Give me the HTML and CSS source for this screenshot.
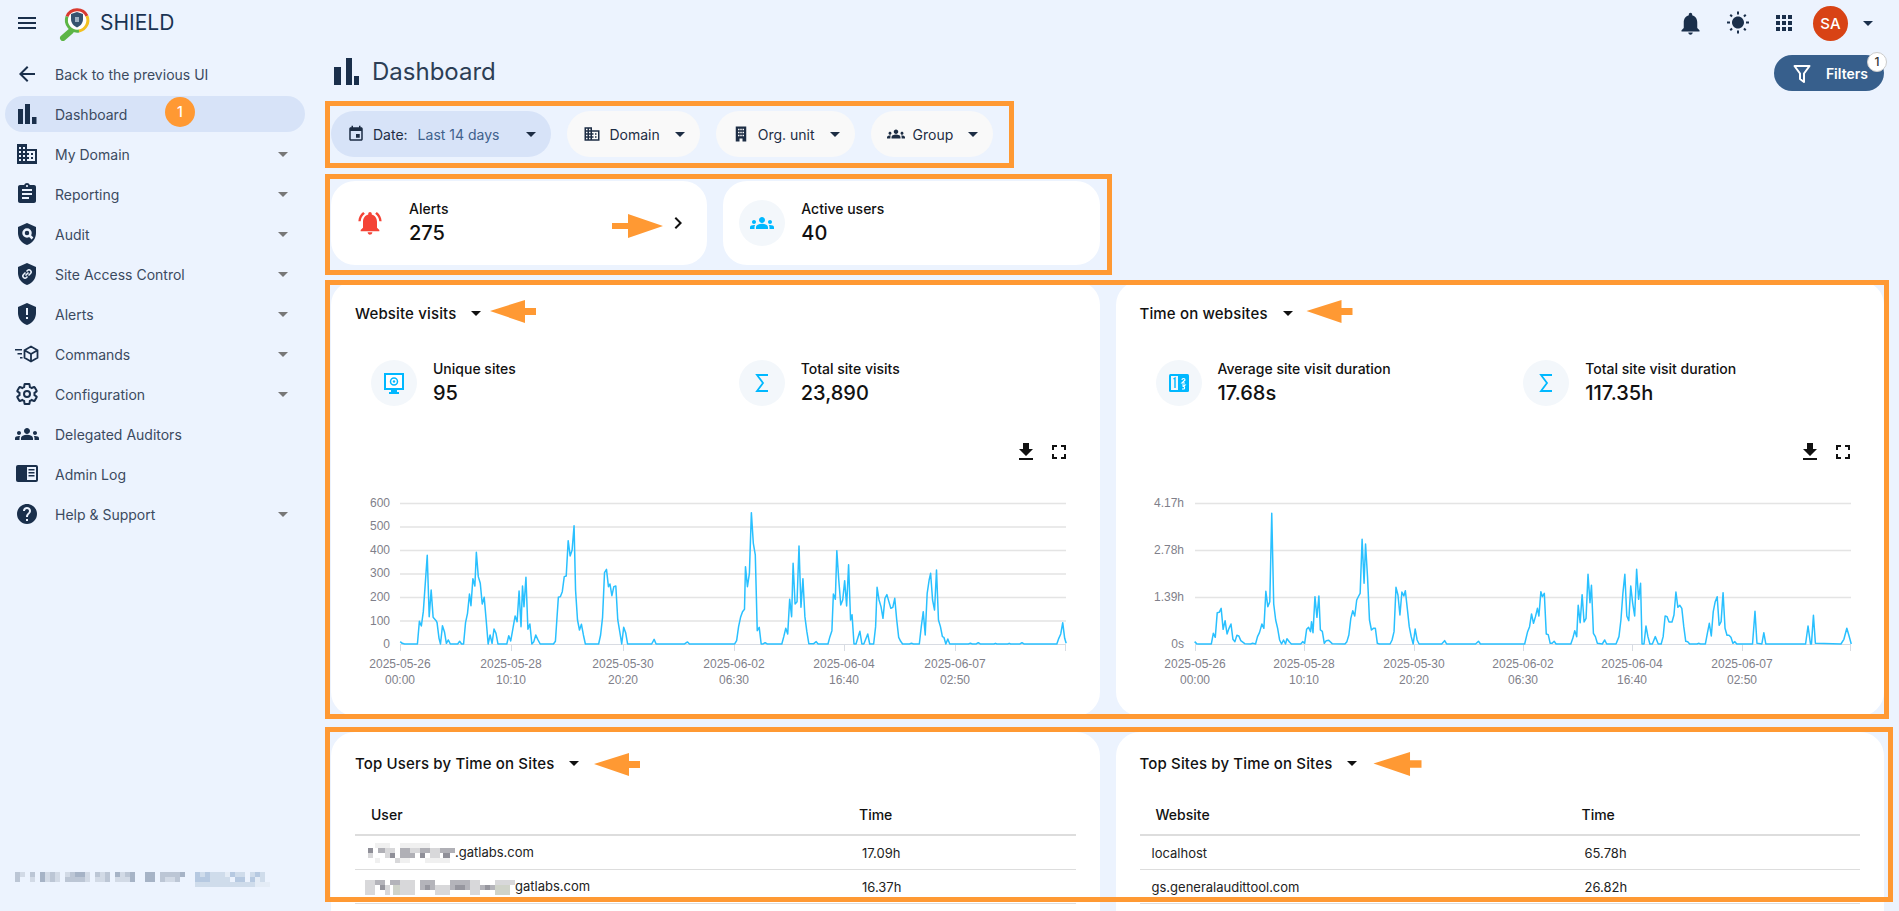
FILE: index.html
```html
<!DOCTYPE html>
<html lang="en">
<head>
    <meta charset="UTF-8">
    <meta name="viewport" content="width=device-width, initial-scale=1.0">
    <title>SHIELD Dashboard</title>
    <link rel="stylesheet" href="styles.css">
</head>
<body>
<div class="app">
    <!-- Top bar -->
    <header class="topbar">
        <svg class="icon menu-btn" viewBox="0 0 24 24"><path d="M3 18h18v-2H3v2zm0-5h18v-2H3v2zm0-7v2h18V6H3z"/></svg>
        <svg class="logo" viewBox="0 0 32 34">
            <path d="M4 31l8-7" stroke="#5cb546" stroke-width="6" stroke-linecap="round" fill="none"/>
            <circle cx="18" cy="13" r="10.5" fill="#fff"/>
            <path d="M8 9.5A11 11 0 0 1 28 9" stroke="#d93a30" stroke-width="3" fill="none"/>
            <path d="M28 9A11 11 0 0 1 20 24" stroke="#f2c020" stroke-width="3" fill="none"/>
            <path d="M20 24A11 11 0 0 1 8 9.5" stroke="#5cb546" stroke-width="3" fill="none"/>
            <path d="M18 5l6 2v5c0 4-2.600 7-6 8.500-3.400-1.500-6-4.500-6-8.500V7z" fill="#36536f"/>
            <path d="M16 10h4v5h-4z" fill="#9fb2c4"/>
        </svg>
        <span class="brand">SHIELD</span>
        <div class="topbar-right">
            <svg class="icon bell" viewBox="0 0 24 24"><path d="M12 22c1.100 0 2-.9 2-2h-4c0 1.100.89 2 2 2zm6-6v-5c0-3.070-1.640-5.640-4.500-6.320V4c0-.83-.67-1.500-1.500-1.500s-1.500.67-1.500 1.500v.68C7.630 5.360 6 7.920 6 11v5l-2 2v1h16v-1l-2-2z"/></svg>
            <svg class="icon" viewBox="0 0 24 24"><path d="M6.760 4.840l-1.800-1.790-1.410 1.410 1.790 1.790 1.420-1.410zM4 10.500H1v2h3v-2zm9-9.950h-2V3.500h2V.55zm7.450 3.910l-1.410-1.410-1.790 1.790 1.410 1.410 1.790-1.790zm-3.210 13.700l1.790 1.800 1.410-1.410-1.800-1.790-1.400 1.400zM20 10.500v2h3v-2h-3zm-8-5c-3.310 0-6 2.690-6 6s2.690 6 6 6 6-2.690 6-6-2.690-6-6-6zm-1 16.950h2V19.500h-2v2.950zm-7.450-3.910l1.410 1.410 1.790-1.800-1.410-1.410-1.790 1.800z"/></svg>
            <svg class="icon" viewBox="0 0 24 24"><path d="M4 8h4V4H4v4zm6 12h4v-4h-4v4zm-6 0h4v-4H4v4zm0-6h4v-4H4v4zm6 0h4v-4h-4v4zm6-10v4h4V4h-4zm-6 4h4V4h-4v4zm6 6h4v-4h-4v4zm0 6h4v-4h-4v4z"/></svg>
            <span class="avatar">SA</span>
            <svg class="icon avatar-caret" viewBox="0 0 24 24"><path d="M7 10l5 5 5-5z"/></svg>
        </div>
    </header>

    <div class="layout">
        <!-- Sidebar -->
        <aside class="sidebar">
            <nav class="nav">
                <a class="nav-item" href="#">
                    <svg class="icon" viewBox="0 0 24 24"><path d="M20 11H7.830l5.590-5.590L12 4l-8 8 8 8 1.410-1.410L7.830 13H20v-2z"/></svg>
                    <span>Back to the previous UI</span>
                </a>
                <a class="nav-item active" href="#">
                    <svg class="icon" viewBox="0 0 24 24"><path d="M3 7h5v15H3zM10 2h5v20h-5zM17 15h4.500v7H17z"/></svg>
                    <span>Dashboard</span>
                </a>
                <a class="nav-item" href="#">
                    <svg class="icon" viewBox="0 0 24 24"><path d="M12 7V2H2v20h20V7H12zM6 19H4v-2h2v2zm0-4H4v-2h2v2zm0-4H4V9h2v2zm0-4H4V5h2v2zm4 12H8v-2h2v2zm0-4H8v-2h2v2zm0-4H8V9h2v2zm0-4H8V5h2v2zm10 12h-8v-2h2v-2h-2v-2h2v-2h-2V9h8v10zm-2-8h-2v2h2v-2zm0 4h-2v2h2v-2z"/></svg>
                    <span>My Domain</span>
                    <svg class="icon caret" viewBox="0 0 24 24"><path d="M7 10l5 5 5-5z"/></svg>
                </a>
                <a class="nav-item" href="#">
                    <svg class="icon" viewBox="0 0 24 24"><path d="M19 3h-4.180C14.400 1.840 13.300 1 12 1c-1.300 0-2.400.84-2.820 2H5c-1.100 0-2 .9-2 2v14c0 1.100.9 2 2 2h14c1.100 0 2-.9 2-2V5c0-1.100-.9-2-2-2zm-7 0c.55 0 1 .45 1 1s-.45 1-1 1-1-.45-1-1 .45-1 1-1zm2 14H7v-2h7v2zm3-4H7v-2h10v2zm0-4H7V7h10v2z"/></svg>
                    <span>Reporting</span>
                    <svg class="icon caret" viewBox="0 0 24 24"><path d="M7 10l5 5 5-5z"/></svg>
                </a>
                <a class="nav-item" href="#">
                    <svg class="icon" viewBox="0 0 24 24">
                        <path d="M12 1L3 5v6c0 5.550 3.840 10.740 9 12 5.160-1.260 9-6.450 9-12V5l-9-4z"/>
                        <circle cx="12" cy="11" r="3.500" fill="none" stroke="#ecf3fe" stroke-width="2.500"/>
                        <path d="M14.500 13.500l3 3" stroke="#ecf3fe" stroke-width="2.500"/>
                    </svg>
                    <span>Audit</span>
                    <svg class="icon caret" viewBox="0 0 24 24"><path d="M7 10l5 5 5-5z"/></svg>
                </a>
                <a class="nav-item" href="#">
                    <svg class="icon" viewBox="0 0 24 24">
                        <path d="M12 1L3 5v6c0 5.550 3.840 10.740 9 12 5.160-1.260 9-6.450 9-12V5l-9-4z"/>
                        <path d="M10.500 10.500l-2 2a2 2 0 0 0 3 3l1-1M13.500 13.500l2-2a2 2 0 0 0-3-3l-1 1M10.500 13.500l3-3" fill="none" stroke="#ecf3fe" stroke-width="1.500"/>
                    </svg>
                    <span>Site Access Control</span>
                    <svg class="icon caret" viewBox="0 0 24 24"><path d="M7 10l5 5 5-5z"/></svg>
                </a>
                <a class="nav-item" href="#">
                    <svg class="icon" viewBox="0 0 24 24">
                        <path d="M12 1L3 5v6c0 5.550 3.840 10.740 9 12 5.160-1.260 9-6.450 9-12V5l-9-4z"/>
                        <path d="M11 6h2v7h-2zM11 15h2v2h-2z" fill="#ecf3fe"/>
                    </svg>
                    <span>Alerts</span>
                    <svg class="icon caret" viewBox="0 0 24 24"><path d="M7 10l5 5 5-5z"/></svg>
                </a>
                <a class="nav-item" href="#">
                    <svg class="icon" viewBox="0 0 24 24">
                        <path d="M0 7h7v1.500H0zM2.500 11h4.500v1.500H2.500zM5 15h2.500v1.500H5z"/>
                        <path d="M16 4.500l6.500 3.700v7.600L16 19.500l-6.500-3.700V8.200zM9.500 8.200l6.500 3.800 6.500-3.800M16 12v7.500" fill="none" stroke="currentColor" stroke-width="1.800"/>
                    </svg>
                    <span>Commands</span>
                    <svg class="icon caret" viewBox="0 0 24 24"><path d="M7 10l5 5 5-5z"/></svg>
                </a>
                <a class="nav-item" href="#">
                    <svg class="icon" viewBox="0 0 24 24">
                        <path fill="none" stroke="currentColor" stroke-width="2" d="M19.430 12.980c.04-.32.07-.64.07-.98s-.03-.66-.07-.98l2.110-1.650c.19-.15.24-.42.12-.64l-2-3.460c-.12-.22-.39-.3-.61-.22l-2.490 1c-.52-.4-1.080-.73-1.690-.98l-.38-2.650C14.460 2.180 14.250 2 14 2h-4c-.25 0-.46.18-.49.42l-.38 2.650c-.61.25-1.170.59-1.690.98l-2.490-1c-.23-.09-.49 0-.61.22l-2 3.460c-.13.22-.07.49.12.64l2.110 1.650c-.04.32-.07.65-.07.98s.03.66.07.98l-2.110 1.650c-.19.15-.24.42-.12.64l2 3.460c.12.22.39.3.61.22l2.490-1c.52.4 1.080.73 1.690.98l.38 2.650c.03.24.24.42.49.42h4c.25 0 .46-.18.49-.42l.38-2.650c.61-.25 1.170-.59 1.690-.98l2.490 1c.23.09.49 0 .61-.22l2-3.460c.12-.22.07-.49-.12-.64l-2.110-1.650z"/>
                        <circle cx="12" cy="12" r="3" fill="none" stroke="currentColor" stroke-width="2"/>
                    </svg>
                    <span>Configuration</span>
                    <svg class="icon caret" viewBox="0 0 24 24"><path d="M7 10l5 5 5-5z"/></svg>
                </a>
                <a class="nav-item" href="#">
                    <svg class="icon" viewBox="0 0 24 24"><path d="M12 12.750c1.630 0 3.070.39 4.240.9 1.080.48 1.760 1.560 1.760 2.730V18H6v-1.610c0-1.180.68-2.260 1.760-2.730 1.170-.52 2.610-.91 4.240-.91zM4 13c1.100 0 2-.9 2-2s-.9-2-2-2-2 .9-2 2 .9 2 2 2zm1.130 1.100c-.37-.06-.74-.1-1.130-.1-.99 0-1.930.21-2.780.58C.48 14.900 0 15.620 0 16.430V18h4.500v-1.610c0-.83.23-1.610.63-2.290zM20 13c1.100 0 2-.9 2-2s-.9-2-2-2-2 .9-2 2 .9 2 2 2zm4 3.430c0-.81-.48-1.530-1.220-1.850-.85-.37-1.790-.58-2.780-.58-.39 0-.76.04-1.130.1.4.68.63 1.460.63 2.290V18H24v-1.570zM12 6c1.660 0 3 1.340 3 3s-1.340 3-3 3-3-1.340-3-3 1.340-3 3-3z"/></svg>
                    <span>Delegated Auditors</span>
                </a>
                <a class="nav-item" href="#">
                    <svg class="icon" viewBox="0 0 24 24">
                        <rect x="1" y="3" width="22" height="17" rx="2"/>
                        <path d="M12 5h9v13h-9z" fill="#ecf3fe"/>
                        <path d="M13.500 7h6v1.500h-6zM13.500 10h6v1.500h-6zM13.500 13h6v1.500h-6z"/>
                    </svg>
                    <span>Admin Log</span>
                </a>
                <a class="nav-item" href="#">
                    <svg class="icon" viewBox="0 0 24 24"><path d="M12 2C6.480 2 2 6.480 2 12s4.480 10 10 10 10-4.480 10-10S17.520 2 12 2zm1 17h-2v-2h2v2zm2.070-7.750l-.9.92C13.450 12.900 13 13.500 13 15h-2v-.5c0-1.100.45-2.100 1.170-2.830l1.240-1.260c.37-.36.59-.86.59-1.410 0-1.100-.9-2-2-2s-2 .9-2 2H8c0-2.210 1.790-4 4-4s4 1.790 4 4c0 .88-.36 1.680-.93 2.250z"/></svg>
                    <span>Help &amp; Support</span>
                    <svg class="icon caret" viewBox="0 0 24 24"><path d="M7 10l5 5 5-5z"/></svg>
                </a>
            </nav>

            <!-- pixelated version line -->
            <svg class="version-blur" viewBox="0 0 255 15" width="255" height="15" shape-rendering="crispEdges">
                <path fill="#a6b3c6" d="M25 0h5v5h-5zM60 0h10v5H60zM100 0h5v5h-5zM115 0h5v5h-5zM130 0h10v10h-10zM165 0h5v5h-5zM25 5h5v5h-5zM115 5h5v5h-5z"/>
                <path fill="#bcc6d5" d="M0 0h5v5H0zM15 0h5v5h-5zM35 0h5v5h-5zM55 0h5v5h-5zM80 0h5v5h-5zM90 0h5v5h-5zM110 0h5v5h-5zM145 0h20v5h-20zM0 5h5v5H0zM35 5h5v5h-5zM50 5h20v5H50zM90 5h5v5h-5zM145 5h5v5h-5zM160 5h5v5h-5z"/>
                <path fill="#d2dae6" d="M5 0h5v5H5zM30 0h5v5h-5zM40 0h5v5h-5zM50 0h5v5h-5zM85 0h5v5h-5zM105 0h5v5h-5zM15 5h5v5h-5zM30 5h5v5h-5zM40 5h5v5h-5zM80 5h10v5H80zM100 5h15v5h-15zM150 5h10v5h-10zM70 5h5v5h-5zM70 0h5v5h-5z"/>
                <path fill="#b6c9e1" d="M180 0h5v5h-5zM190 0h5v5h-5zM215 0h5v5h-5zM240 0h5v5h-5zM180 5h15v5h-15zM220 5h10v5h-10zM235 5h5v5h-5z"/>
                <path fill="#cfdceb" d="M185 0h5v5h-5zM195 0h15v5h-15zM220 0h10v5h-10zM235 0h5v5h-5zM245 0h5v5h-5zM195 5h20v5h-20zM245 5h5v5h-5zM180 10h60v5h-60z"/>
                <path fill="#e4ecf6" d="M210 0h5v5h-5zM240 5h5v5h-5zM240 10h15v5h-15z"/>
            </svg>
        </aside>

        <!-- Main content -->
        <main class="main">
            <div class="page-head">
                <div class="page-title">
                    <svg class="title-icon" viewBox="0 0 25 27"><path d="M0 9h7v18H0zM12 0h6v27h-6zM20 18h5v9h-5z"/></svg>
                    <h1>Dashboard</h1>
                </div>
                <button class="filters-btn">
                    <svg class="icon" viewBox="0 0 24 24"><path d="M4.500 5h15l-5.500 7.500V21l-4-3v-5.500z" fill="none" stroke="currentColor" stroke-width="2" stroke-linejoin="round"/></svg>
                    Filters
                    <span class="filters-badge">1</span>
                </button>
            </div>

            <div class="chips">
                <div class="chip selected">
                    <svg class="chip-icon" viewBox="0 0 24 24"><path d="M17 12h-5v5h5v-5zM16 1v2H8V1H6v2H5c-1.110 0-1.990.9-1.990 2L3 19c0 1.100.89 2 2 2h14c1.100 0 2-.9 2-2V5c0-1.100-.9-2-2-2h-1V1h-2zm3 18H5V8h14v11z"/></svg>
                    <span>Date:</span>
                    <span class="chip-value">Last 14 days</span>
                    <svg class="icon" viewBox="0 0 24 24"><path d="M7 10l5 5 5-5z"/></svg>
                </div>
                <div class="chip">
                    <svg class="chip-icon" viewBox="0 0 24 24"><path d="M12 7V3H2v18h20V7H12zM6 19H4v-2h2v2zm0-4H4v-2h2v2zm0-4H4V9h2v2zm0-4H4V5h2v2zm4 12H8v-2h2v2zm0-4H8v-2h2v2zm0-4H8V9h2v2zm0-4H8V5h2v2zm10 12h-8v-2h2v-2h-2v-2h2v-2h-2V9h8v10zm-2-8h-2v2h2v-2zm0 4h-2v2h2v-2z"/></svg>
                    <span>Domain</span>
                    <svg class="icon" viewBox="0 0 24 24"><path d="M7 10l5 5 5-5z"/></svg>
                </div>
                <div class="chip">
                    <svg class="chip-icon" viewBox="0 0 24 24"><path d="M5 2h14v20h-5v-4h-4v4H5zM8 5v2h2V5zm6 0v2h2V5zM8 9v2h2V9zm6 0v2h2V9zM8 13v2h2v-2zm6 0v2h2v-2zM11 5v2h2V5zM11 9v2h2V9zM11 13v2h2v-2z" fill-rule="evenodd"/></svg>
                    <span>Org. unit</span>
                    <svg class="icon" viewBox="0 0 24 24"><path d="M7 10l5 5 5-5z"/></svg>
                </div>
                <div class="chip">
                    <svg class="chip-icon" viewBox="0 0 24 24"><path d="M12 12.750c1.630 0 3.070.39 4.240.9 1.080.48 1.760 1.560 1.760 2.730V18H6v-1.610c0-1.180.68-2.260 1.760-2.730 1.170-.52 2.610-.91 4.240-.91zM4 13c1.100 0 2-.9 2-2s-.9-2-2-2-2 .9-2 2 .9 2 2 2zm1.130 1.100c-.37-.06-.74-.1-1.130-.1-.99 0-1.930.21-2.780.58C.48 14.900 0 15.620 0 16.430V18h4.500v-1.610c0-.83.23-1.610.63-2.290zM20 13c1.100 0 2-.9 2-2s-.9-2-2-2-2 .9-2 2 .9 2 2 2zm4 3.430c0-.81-.48-1.530-1.220-1.850-.85-.37-1.790-.58-2.780-.58-.39 0-.76.04-1.130.1.4.68.63 1.460.63 2.290V18H24v-1.570zM12 6c1.660 0 3 1.340 3 3s-1.340 3-3 3-3-1.340-3-3 1.340-3 3-3z"/></svg>
                    <span>Group</span>
                    <svg class="icon" viewBox="0 0 24 24"><path d="M7 10l5 5 5-5z"/></svg>
                </div>
            </div>

            <div class="kpi-row">
                <div class="kpi-card">
                    <div class="stat">
                        <span class="stat-circle plain">
                            <svg class="icon" viewBox="0 0 24 24"><path d="M7.580 4.080L6.150 2.650C3.750 4.480 2.170 7.300 2.030 10.500h2c.15-2.650 1.510-4.970 3.550-6.420zm12.390 6.420h2c-.15-3.200-1.730-6.020-4.120-7.850l-1.420 1.430c2.020 1.450 3.390 3.770 3.540 6.420zM18 11c0-3.070-1.640-5.640-4.500-6.320V4c0-.83-.67-1.500-1.500-1.500s-1.500.67-1.500 1.500v.68C7.630 5.360 6 7.920 6 11v5l-2 2v1h16v-1l-2-2v-5zm-6 11c.14 0 .27-.01.4-.04.65-.14 1.180-.58 1.440-1.180.1-.24.15-.5.15-.78h-4c.01 1.100.9 2 2.010 2z"/></svg>
                        </span>
                        <div>
                            <div class="stat-label">Alerts</div>
                            <div class="stat-value">275</div>
                        </div>
                    </div>
                    <svg class="icon kpi-chevron" viewBox="0 0 24 24"><path d="M10 6L8.590 7.410 13.170 12l-4.580 4.590L10 18l6-6z"/></svg>
                </div>
                <div class="kpi-card">
                    <div class="stat">
                        <span class="stat-circle">
                            <svg class="icon" viewBox="0 0 24 24"><path d="M12 12.750c1.630 0 3.070.39 4.240.9 1.080.48 1.760 1.560 1.760 2.730V18H6v-1.610c0-1.180.68-2.260 1.760-2.730 1.170-.52 2.610-.91 4.240-.91zM4 13c1.100 0 2-.9 2-2s-.9-2-2-2-2 .9-2 2 .9 2 2 2zm1.130 1.100c-.37-.06-.74-.1-1.130-.1-.99 0-1.930.21-2.780.58C.48 14.900 0 15.620 0 16.430V18h4.500v-1.610c0-.83.23-1.610.63-2.290zM20 13c1.100 0 2-.9 2-2s-.9-2-2-2-2 .9-2 2 .9 2 2 2zm4 3.430c0-.81-.48-1.530-1.220-1.850-.85-.37-1.790-.58-2.780-.58-.39 0-.76.04-1.130.1.4.68.63 1.460.63 2.290V18H24v-1.570zM12 6c1.660 0 3 1.340 3 3s-1.340 3-3 3-3-1.340-3-3 1.340-3 3-3z"/></svg>
                        </span>
                        <div>
                            <div class="stat-label">Active users</div>
                            <div class="stat-value">40</div>
                        </div>
                    </div>
                </div>
            </div>

            <div class="card-row">
                <section class="card">
                    <div class="card-title">Website visits <svg class="icon" viewBox="0 0 24 24"><path d="M7 10l5 5 5-5z"/></svg></div>
                    <div class="stats">
                        <div class="stat">
                            <span class="stat-circle">
                                <svg class="icon" viewBox="0 0 24 24">
                                    <rect x="3" y="3" width="18" height="15" fill="#fff" stroke="currentColor" stroke-width="2"/>
                                    <path d="M9 19h6v2h2v2H7v-2h2z"/>
                                    <circle cx="12" cy="10.500" r="3.500" fill="none" stroke="currentColor" stroke-width="1.500"/>
                                    <circle cx="12" cy="10.500" r="1.200"/>
                                </svg>
                            </span>
                            <div>
                                <div class="stat-label">Unique sites</div>
                                <div class="stat-value">95</div>
                            </div>
                        </div>
                        <div class="stat">
                            <span class="stat-circle">
                                <svg class="icon" viewBox="0 0 24 24"><path d="M18 4H7l6 8-6 8h11" fill="none" stroke="currentColor" stroke-width="1.800"/></svg>
                            </span>
                            <div>
                                <div class="stat-label">Total site visits</div>
                                <div class="stat-value">23,890</div>
                            </div>
                        </div>
                    </div>
                    <div class="chart-tools">
                        <svg class="icon" viewBox="0 0 24 24"><path d="M19 9h-4V3H9v6H5l7 7 7-7zM5 18v2h14v-2H5z"/></svg>
                        <svg class="icon" viewBox="0 0 24 24"><path d="M7 14H5v5h5v-2H7v-3zm-2-4h2V7h3V5H5v5zm12 7h-3v2h5v-5h-2v3zM14 5v2h3v3h2V5h-5z"/></svg>
                    </div>
                    <svg class="chart" width="721" height="210">
                        <g class="grid">
                            <path d="M45 13.500H711M45 37H711M45 60.500H711M45 84H711M45 107.500H711M45 131H711"/>
                            <path class="axis" d="M45 154.500H711M45.500 154V161M156.500 154V161M268.500 154V161M379.500 154V161M489.500 154V161M600.500 154V161M710.500 154V161"/>
                        </g>
                        <g class="y-labels">
                            <text x="35" y="17">600</text><text x="35" y="40">500</text><text x="35" y="64">400</text><text x="35" y="87">300</text><text x="35" y="111">200</text><text x="35" y="135">100</text><text x="35" y="158">0</text>
                        </g>
                        <g class="x-labels">
                            <text x="45" y="178">2025-05-26</text><text x="45" y="194">00:00</text>
                            <text x="156" y="178">2025-05-28</text><text x="156" y="194">10:10</text>
                            <text x="268" y="178">2025-05-30</text><text x="268" y="194">20:20</text>
                            <text x="379" y="178">2025-06-02</text><text x="379" y="194">06:30</text>
                            <text x="489" y="178">2025-06-04</text><text x="489" y="194">16:40</text>
                            <text x="600" y="178">2025-06-07</text><text x="600" y="194">02:50</text>
                        </g>
                        <g transform="translate(-25 -10) scale(.4911 .3333)">
                            <polyline class="line" points="143,485 147,490 152,492 178,492 182,424 186,438 190,395 198,226 202,410 206,330 210,412 216,422 218,428 222,475 225,492 229,437 233,455 237,490 241,480 245,492 260,492 264,484 268,492 272,492 276,428 280,400 284,342 287,377 291,296 295,318 298,217 302,290 306,310 310,372 314,352 318,420 322,492 326,465 330,490 334,447 338,460 342,492 360,492 364,467 368,483 372,450 377,408 381,425 385,333 389,440 392,318 395,380 399,292 403,448 407,432 411,492 415,485 419,465 423,478 428,492 455,492 459,484 465,352 469,350 473,335 477,290 481,288 485,182 489,228 493,210 497,137 500,330 504,420 508,450 512,433 516,465 520,492 547,492 551,465 555,412 559,278 563,268 567,320 570,312 574,347 578,320 582,318 586,420 590,455 594,492 598,442 602,458 606,492 655,492 660,478 664,492 722,492 728,486 732,492 824,492 828,482 832,440 836,412 840,395 844,388 846,260 850,320 854,280 858,98 862,190 866,225 870,452 874,442 878,492 882,492 886,488 890,492 920,492 924,470 928,445 932,462 936,358 940,410 943,250 947,372 951,365 955,198 959,382 963,296 967,410 971,455 975,491 985,491 990,485 994,492 1014,492 1018,470 1022,452 1025,342 1029,358 1032,212 1036,300 1040,375 1044,360 1048,302 1052,378 1056,254 1060,420 1063,404 1067,492 1071,492 1079,454 1083,492 1087,492 1095,462 1099,492 1107,492 1111,440 1114,322 1118,360 1122,380 1126,415 1130,355 1134,344 1138,365 1142,385 1146,382 1150,355 1154,420 1158,472 1162,484 1166,492 1180,492 1184,490 1188,492 1200,492 1204,440 1208,395 1212,465 1216,340 1220,300 1223,280 1227,360 1231,390 1235,270 1239,420 1243,440 1247,470 1250,472 1254,492 1258,477 1262,492 1300,492 1304,490 1308,492 1316,492 1320,488 1324,492 1352,492 1355,490 1358,492 1380,492 1383,490 1386,492 1405,492 1409,488 1413,492 1480,492 1484,475 1488,462 1492,428 1496,475 1499,490"/>
                        </g>
                    </svg>
                </section>

                <section class="card">
                    <div class="card-title">Time on websites <svg class="icon" viewBox="0 0 24 24"><path d="M7 10l5 5 5-5z"/></svg></div>
                    <div class="stats">
                        <div class="stat">
                            <span class="stat-circle">
                                <svg class="icon" viewBox="0 0 24 24">
                                    <rect x="2" y="3" width="20" height="18" rx="1.500"/>
                                    <path d="M4 5h7v14H4z" fill="#f3f7fb"/>
                                    <path d="M6.500 8L8 7v10" fill="none" stroke="currentColor" stroke-width="1.400"/>
                                    <path d="M15 9c0-2 3-2 3 0l-3 3h3M15 14h3l-1.500 1.500c1.500 0 1.500 2.500 0 2.500h-1.500" fill="none" stroke="#fff" stroke-width="1.200"/>
                                </svg>
                            </span>
                            <div>
                                <div class="stat-label">Average site visit duration</div>
                                <div class="stat-value">17.68s</div>
                            </div>
                        </div>
                        <div class="stat">
                            <span class="stat-circle">
                                <svg class="icon" viewBox="0 0 24 24"><path d="M18 4H7l6 8-6 8h11" fill="none" stroke="currentColor" stroke-width="1.800"/></svg>
                            </span>
                            <div>
                                <div class="stat-label">Total site visit duration</div>
                                <div class="stat-value">117.35h</div>
                            </div>
                        </div>
                    </div>
                    <div class="chart-tools">
                        <svg class="icon" viewBox="0 0 24 24"><path d="M19 9h-4V3H9v6H5l7 7 7-7zM5 18v2h14v-2H5z"/></svg>
                        <svg class="icon" viewBox="0 0 24 24"><path d="M7 14H5v5h5v-2H7v-3zm-2-4h2V7h3V5H5v5zm12 7h-3v2h5v-5h-2v3zM14 5v2h3v3h2V5h-5z"/></svg>
                    </div>
                    <svg class="chart" width="720" height="210">
                        <g class="grid">
                            <path d="M55 13.500H711M55 60.500H711M55 107.500H711"/>
                            <path class="axis" d="M55 154.500H711M55.500 154V161M164.500 154V161M274.500 154V161M383.500 154V161M492.500 154V161M602.500 154V161M710.500 154V161"/>
                        </g>
                        <g class="y-labels">
                            <text x="44" y="17">4.17h</text><text x="44" y="64">2.78h</text><text x="44" y="111">1.39h</text><text x="44" y="158">0s</text>
                        </g>
                        <g class="x-labels">
                            <text x="55" y="178">2025-05-26</text><text x="55" y="194">00:00</text>
                            <text x="164" y="178">2025-05-28</text><text x="164" y="194">10:10</text>
                            <text x="274" y="178">2025-05-30</text><text x="274" y="194">20:20</text>
                            <text x="383" y="178">2025-06-02</text><text x="383" y="194">06:30</text>
                            <text x="492" y="178">2025-06-04</text><text x="492" y="194">16:40</text>
                            <text x="602" y="178">2025-06-07</text><text x="602" y="194">02:50</text>
                        </g>
                        <g transform="translate(-20 -10) scale(.4911 .3333)">
                            <polyline class="line" points="152,485 156,491 160,492 186,492 190,460 194,472 198,398 202,397 206,385 210,448 214,422 218,462 222,445 226,432 230,478 234,485 238,466 242,468 246,482 254,491 266,492 270,490 276,492 280,470 284,458 289,432 293,445 297,334 301,380 305,365 309,100 313,372 317,420 321,445 325,480 329,492 333,480 337,492 340,476 345,486 349,492 368,492 372,485 376,490 380,448 384,442 388,455 390,425 393,458 397,350 401,412 405,348 408,450 412,454 416,490 420,482 425,481 432,491 458,492 462,485 466,465 470,415 474,392 478,408 482,360 486,348 489,340 493,178 497,310 500,192 504,290 508,420 512,450 516,445 520,445 524,490 528,492 550,492 554,480 558,455 562,322 566,345 570,405 574,336 578,348 581,332 585,385 589,440 593,470 597,492 601,447 605,480 609,492 655,492 661,482 665,492 724,492 730,484 734,492 824,492 830,455 834,440 838,402 842,430 846,410 850,385 853,408 857,335 860,350 864,340 868,462 872,464 876,490 880,490 884,484 888,492 918,492 922,475 926,452 930,470 933,376 937,428 941,344 945,426 949,415 953,283 957,368 960,316 964,460 968,470 972,490 982,492 987,480 991,492 1010,492 1016,470 1020,420 1024,340 1028,283 1032,408 1036,422 1040,318 1044,370 1048,408 1052,268 1056,358 1060,310 1063,492 1067,492 1071,438 1075,470 1079,492 1084,492 1090,470 1096,492 1102,492 1106,470 1110,408 1114,410 1118,426 1124,426 1128,405 1132,336 1136,382 1140,376 1144,385 1148,440 1152,484 1156,485 1160,492 1175,492 1178,490 1182,492 1192,492 1196,460 1200,430 1204,468 1208,395 1212,365 1216,350 1220,436 1224,425 1228,338 1232,445 1236,466 1240,466 1244,472 1248,490 1252,485 1256,492 1288,492 1293,394 1297,490 1307,492 1311,458 1315,492 1396,492 1401,438 1406,492 1408,492 1412,406 1416,490 1468,492 1474,478 1480,445 1484,465 1489,492"/>
                        </g>
                    </svg>
                </section>
            </div>

            <div class="card-row">
                <section class="card table-card">
                    <div class="card-title">Top Users by Time on Sites <svg class="icon" viewBox="0 0 24 24"><path d="M7 10l5 5 5-5z"/></svg></div>
                    <table class="top-table users-table">
                        <thead><tr><th>User</th><th>Time</th></tr></thead>
                        <tbody>
                            <tr>
                                <td>
                                    <svg class="name-blur" viewBox="0 0 90 20" width="90" height="20" shape-rendering="crispEdges">
                                        <path fill="#f0f0f0" d="M10 0h15v5H10zM35 0h30v5H35zM10 15h5v5h-5zM35 15h10v5H35zM60 15h25v5H60z"/>
                                        <path fill="#d8d8da" d="M3 5h5v10H3zM20 5h10v10H20zM45 5h10v5H45zM65 5h10v10H65zM30 15h5v5h-5z"/>
                                        <path fill="#b0b0b6" d="M13 5h7v5h-7zM35 5h10v10H35zM55 5h10v5H55zM75 5h15v5H75zM45 10h5v5h-5z"/>
                                        <path fill="#8f8f98" d="M3 5h5v5H3zM25 10h5v5h-5zM55 10h5v5h-5zM78 10h7v5h-7z"/>
                                    </svg>.gatlabs.com
                                </td>
                                <td class="time-cell">17.09h</td>
                            </tr>
                            <tr>
                                <td>
                                    <svg class="name-blur" viewBox="0 0 150 15" width="150" height="15" shape-rendering="crispEdges">
                                        <path fill="#d8d8da" d="M0 0h10v15H0zM20 5h5v10h-5zM35 0h15v15H35zM70 5h15v10H70zM105 0h10v15h-10zM130 0h20v5h-20z"/>
                                        <path fill="#b4b4ba" d="M10 0h10v5H10zM25 0h10v5H25zM55 0h15v10H55zM85 0h20v10H85zM115 5h15v5h-15z"/>
                                        <path fill="#96969e" d="M15 5h5v5h-5zM60 5h5v5h-5zM90 5h10v5H90zM120 5h5v5h-5z"/>
                                        <path fill="#cfd3c9" d="M28 5h7v10h-7zM130 5h15v10h-15z"/>
                                    </svg>gatlabs.com
                                </td>
                                <td class="time-cell">16.37h</td>
                            </tr>
                            <tr><td></td><td></td></tr>
                        </tbody>
                    </table>
                </section>

                <section class="card table-card">
                    <div class="card-title">Top Sites by Time on Sites <svg class="icon" viewBox="0 0 24 24"><path d="M7 10l5 5 5-5z"/></svg></div>
                    <table class="top-table sites-table">
                        <thead><tr><th>Website</th><th>Time</th></tr></thead>
                        <tbody>
                            <tr><td>localhost</td><td class="time-cell">65.78h</td></tr>
                            <tr><td>gs.generalaudittool.com</td><td class="time-cell">26.82h</td></tr>
                            <tr><td></td><td></td></tr>
                        </tbody>
                    </table>
                </section>
            </div>
        </main>
    </div>

    <!-- Orange annotations drawn over the screenshot -->
    <span class="step-badge">1</span>
    <div class="mark mark-chips"></div>
    <div class="mark mark-kpis"></div>
    <div class="mark mark-charts"></div>
    <div class="mark mark-tables"></div>
    <svg class="arrow arrow-alerts" viewBox="0 0 51 24"><path d="M0 9h16V0l35 12-35 12v-9H0z"/></svg>
    <svg class="arrow arrow-visits" viewBox="0 0 46 23"><path d="M46 8H35V0L0 11l35 12v-8h11z"/></svg>
    <svg class="arrow arrow-time" viewBox="0 0 46 23"><path d="M46 8H35V0L0 11l35 12v-8h11z"/></svg>
    <svg class="arrow arrow-users" viewBox="0 0 46 23"><path d="M46 8H35V0L0 11l35 12v-8h11z"/></svg>
    <svg class="arrow arrow-sites" viewBox="0 0 46 23"><path d="M46 8H35V0L0 11l35 12v-8h11z"/></svg>
</div>
</body>
</html>
```

FILE: styles.css
```css
/* Global Styles */
body {
    margin: 0;
    font-family: 'Inter', 'Noto Sans', sans-serif;
    font-size: 14px;
    background: #ecf3fe;
    color: #111;
    overflow: hidden;
}

.app {
    position: relative;
    height: 911px;
    overflow: hidden;
}

.icon {
    width: 24px;
    height: 24px;
    fill: currentColor;
    flex: none;
    display: block;
}

/* Top bar */
.topbar {
    height: 46px;
    display: flex;
    align-items: center;
    padding: 0 19px 0 15px;
    color: #1a2f4b;
}

.logo {
    width: 32px;
    height: 34px;
    margin-left: 20px;
    margin-top: 1px;
}

.brand {
    font-size: 21px;
    margin-left: 9px;
    margin-top: -1px;
    color: #1a3353;
}

.topbar-right {
    margin-left: auto;
    display: flex;
    align-items: center;
    gap: 22px;
}

.bell {
    width: 27px;
    height: 27px;
}

.avatar {
    width: 35px;
    height: 35px;
    border-radius: 50%;
    background: #d84315;
    color: #fff;
    font-size: 15px;
    font-weight: 500;
    display: flex;
    align-items: center;
    justify-content: center;
    margin-left: -5px;
}

.avatar-caret {
    margin-left: -14px;
}

/* Layout */
.layout {
    display: flex;
    height: 865px;
}

/* Sidebar */
.sidebar {
    width: 331px;
    flex: none;
    box-sizing: border-box;
    display: flex;
    flex-direction: column;
    padding: 10px 0 24px;
}

.nav {
    padding-left: 5px;
    width: 300px;
}

.nav-item {
    display: flex;
    align-items: center;
    height: 36px;
    margin-bottom: 4px;
    padding: 0 10px;
    border-radius: 18px;
    color: #3b4a60;
    text-decoration: none;
    gap: 16px;
}

.nav-item .icon:first-child {
    color: #1a2f4b;
}

.nav-item.active {
    background: #d7e3f8;
}

.nav-item .caret {
    margin-left: auto;
    color: #777;
}

.version-blur {
    margin: auto 0 0 15px;
    display: block;
}

/* Main */
.main {
    flex: 1;
    min-width: 0;
    padding: 9px 15px 0 0;
}

.page-head {
    display: flex;
    justify-content: space-between;
    align-items: flex-start;
    height: 36px;
}

.page-title {
    display: flex;
    align-items: center;
    gap: 13px;
    height: 32px;
    padding-left: 3px;
    color: #1a2f4b;
}

.title-icon {
    width: 25px;
    height: 27px;
    fill: #1a2f4b;
}

h1 {
    margin: 0;
    font-size: 24px;
    font-weight: 400;
    color: #2c3e55;
}

.filters-btn {
    position: relative;
    display: flex;
    align-items: center;
    gap: 12px;
    height: 36px;
    padding: 0 16px;
    border: none;
    border-radius: 18px;
    background: #375f8c;
    color: #fff;
    font-family: inherit;
    font-size: 14px;
    font-weight: 600;
}

.filters-badge {
    position: absolute;
    top: -3px;
    right: -3px;
    width: 18px;
    height: 18px;
    border: 1px solid #ccc;
    border-radius: 50%;
    background: #fff;
    color: #333;
    font-size: 12px;
    font-weight: 500;
    line-height: 18px;
    text-align: center;
}

/* Filter chips */
.chips {
    display: flex;
    gap: 16px;
    margin-top: 20px;
}

.chip {
    display: flex;
    align-items: center;
    height: 46px;
    padding: 0 8px 0 16px;
    border-radius: 23px;
    background: #f9f9f9;
    color: #1d2d44;
    gap: 8px;
}

.chip.selected {
    background: #d7e3f8;
}

.chip-icon {
    width: 18px;
    height: 18px;
    fill: #1d2d44;
    flex: none;
}

.chip-value {
    color: #3f618c;
    margin: 0 12px 0 2px;
}

/* KPI cards */
.kpi-row {
    display: grid;
    grid-template-columns: repeat(4, 1fr);
    gap: 16px;
    margin-top: 24px;
}

.kpi-card {
    height: 84px;
    box-sizing: border-box;
    padding: 0 17px 0 16px;
    display: flex;
    align-items: center;
    background: #fff;
    border-radius: 24px;
}

.kpi-chevron {
    margin-left: auto;
    color: #111;
}

.stat {
    display: flex;
    align-items: center;
    gap: 16px;
}

.stat-circle {
    width: 46px;
    height: 46px;
    flex: none;
    border-radius: 50%;
    background: #f3f7fb;
    color: #00b8ff;
    display: flex;
    align-items: center;
    justify-content: center;
}

.stat-circle.plain {
    background: none;
    color: #f44336;
}

.stat-circle.plain .icon {
    width: 28px;
    height: 28px;
}

.stat-label {
    font-weight: 500;
    line-height: 20px;
}

.stat-value {
    font-size: 20px;
    font-weight: 500;
    line-height: 28px;
}

/* Cards */
.card-row {
    display: grid;
    grid-template-columns: 1fr 1fr;
    gap: 16px;
    margin-top: 16px;
}

.card {
    height: 435px;
    box-sizing: border-box;
    padding: 20px 24px 0;
    background: #fff;
    border-radius: 24px;
    min-width: 0;
}

.table-card {
    height: 400px;
    padding-top: 19px;
}

.card-title {
    display: flex;
    align-items: center;
    gap: 8px;
    height: 24px;
    font-size: 15px;
    font-weight: 500;
    letter-spacing: .15px;
}

.stats {
    display: grid;
    grid-template-columns: 1fr 1fr;
    gap: 47px;
    margin-top: 34px;
    padding: 0 16px;
}

.chart-tools {
    display: flex;
    justify-content: flex-end;
    gap: 9px;
    margin-top: 33px;
    padding-right: 5px;
}

/* Charts */
.chart {
    display: block;
    margin-top: 26px;
    font-family: 'Liberation Sans', Arial, sans-serif;
    font-size: 12px;
    fill: #7f7f8a;
}

.grid path {
    fill: none;
    stroke: #e4e4e4;
    stroke-width: 1.5;
}

.grid .axis {
    stroke: #d8dce3;
    stroke-width: 1;
}

.y-labels text {
    text-anchor: end;
}

.x-labels text {
    text-anchor: middle;
}

.line {
    fill: none;
    stroke: #29c0ff;
    stroke-width: 1.5;
    stroke-linejoin: round;
    vector-effect: non-scaling-stroke;
}

/* Tables */
.top-table {
    width: 100%;
    margin-top: 21px;
    border-collapse: collapse;
    table-layout: fixed;
}

.top-table th {
    height: 36px;
    padding: 0 0 2px 16px;
    text-align: left;
    font-weight: 500;
    border-bottom: 2px solid #ddd;
}

.top-table td {
    height: 33px;
    padding: 0 0 0 12px;
    font-size: 13px;
    color: #222;
    border-bottom: 1px solid #ddd;
    white-space: nowrap;
}

.top-table .time-cell {
    padding-left: 19px;
}

.users-table th:first-child {
    width: 472px;
}

.sites-table th:first-child {
    width: 410px;
}

.name-blur {
    vertical-align: middle;
    margin-left: -2px;
}

/* Annotations */
.step-badge {
    position: absolute;
    left: 165px;
    top: 97px;
    width: 30px;
    height: 30px;
    border-radius: 50%;
    background: #ff9933;
    color: #fff;
    font-size: 14px;
    font-weight: 500;
    line-height: 30px;
    text-align: center;
}

.mark {
    position: absolute;
    box-sizing: border-box;
    border: 5px solid #ff9933;
}

.mark-chips {
    left: 325px;
    top: 101px;
    width: 689px;
    height: 67px;
}

.mark-kpis {
    left: 325px;
    top: 174px;
    width: 787px;
    height: 101px;
}

.mark-charts {
    left: 325px;
    top: 280px;
    width: 1564px;
    height: 439px;
}

.mark-tables {
    left: 325px;
    top: 727px;
    width: 1568px;
    height: 175px;
}

.arrow {
    position: absolute;
    fill: #ff9933;
}

.arrow-alerts {
    left: 612px;
    top: 214px;
    width: 51px;
    height: 24px;
}

.arrow-visits {
    left: 490px;
    top: 300px;
    width: 46px;
    height: 23px;
}

.arrow-time {
    left: 1306px;
    top: 300px;
    width: 47px;
    height: 23px;
}

.arrow-users {
    left: 593px;
    top: 753px;
    width: 48px;
    height: 23px;
}

.arrow-sites {
    left: 1373px;
    top: 752px;
    width: 49px;
    height: 24px;
}
```
